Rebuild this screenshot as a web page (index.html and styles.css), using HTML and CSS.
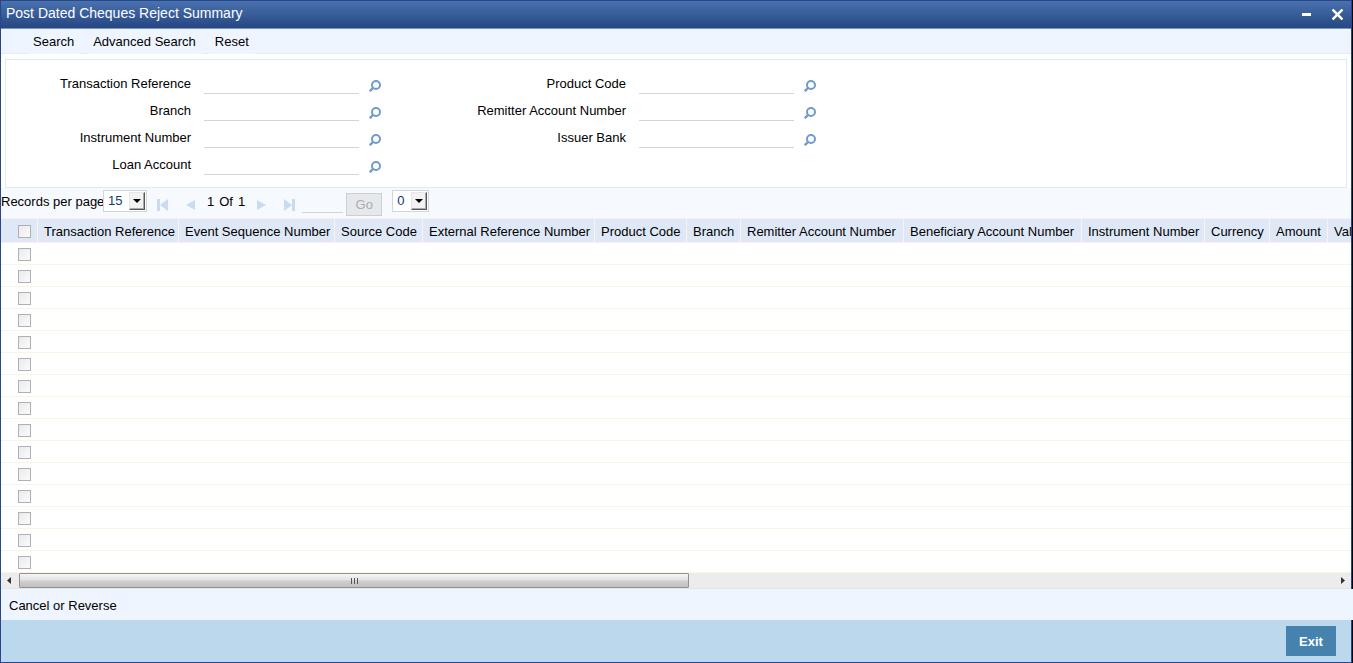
FILE: index.html
```html
<!DOCTYPE html>
<html lang="en">
<head>
    <meta charset="UTF-8">
    <meta name="viewport" content="width=device-width, initial-scale=1.0">
    <title>Post Dated Cheques Reject Summary</title>
    <link rel="stylesheet" href="styles.css">
</head>
<body>
    <svg class="sprite" aria-hidden="true">
        <symbol id="lens" viewBox="0 0 12 12">
            <circle cx="7" cy="5" r="4" fill="none" stroke="#6f9bd0" stroke-width="2"/>
            <path d="M4.5 7.5 L0.8 11.2" stroke="#6f9bd0" stroke-width="2.4"/>
        </symbol>
        <symbol id="arrow" viewBox="0 0 8 4">
            <path d="M0 0 H8 L4 4 Z" fill="#000"/>
        </symbol>
    </svg>

    <div class="window">
        <header class="titlebar">
            <h1>Post Dated Cheques Reject Summary</h1>
            <div class="window-buttons">
                <button type="button" aria-label="Minimize">
                    <svg width="11" height="11" viewBox="0 0 11 11"><path d="M1 4h9v3h-9z" fill="#fff"/></svg>
                </button>
                <button type="button" aria-label="Close">
                    <svg width="11" height="11" viewBox="0 0 11 11"><path d="M0.5 0.5 L10.5 10.5 M10.5 0.5 L0.5 10.5" stroke="#fff" stroke-width="2.4"/></svg>
                </button>
            </div>
        </header>

        <nav class="menu">
            <button type="button">Search</button>
            <button type="button">Advanced Search</button>
            <button type="button">Reset</button>
        </nav>

        <form class="criteria">
            <div class="criteria-column">
                <div class="field">
                    <label for="txn-ref">Transaction Reference</label>
                    <input type="text" id="txn-ref">
                    <button type="button" aria-label="Find transaction reference"><svg><use href="#lens"/></svg></button>
                </div>
                <div class="field">
                    <label for="branch">Branch</label>
                    <input type="text" id="branch">
                    <button type="button" aria-label="Find branch"><svg><use href="#lens"/></svg></button>
                </div>
                <div class="field">
                    <label for="instrument">Instrument Number</label>
                    <input type="text" id="instrument">
                    <button type="button" aria-label="Find instrument number"><svg><use href="#lens"/></svg></button>
                </div>
                <div class="field">
                    <label for="loan">Loan Account</label>
                    <input type="text" id="loan">
                    <button type="button" aria-label="Find loan account"><svg><use href="#lens"/></svg></button>
                </div>
            </div>
            <div class="criteria-column">
                <div class="field">
                    <label for="product">Product Code</label>
                    <input type="text" id="product">
                    <button type="button" aria-label="Find product code"><svg><use href="#lens"/></svg></button>
                </div>
                <div class="field">
                    <label for="remitter">Remitter Account Number</label>
                    <input type="text" id="remitter">
                    <button type="button" aria-label="Find remitter account"><svg><use href="#lens"/></svg></button>
                </div>
                <div class="field">
                    <label for="issuer">Issuer Bank</label>
                    <input type="text" id="issuer">
                    <button type="button" aria-label="Find issuer bank"><svg><use href="#lens"/></svg></button>
                </div>
            </div>
        </form>

        <div class="pager">
            <label for="page-size">Records per page</label>
            <span class="select size-select">
                <select id="page-size"><option>15</option></select>
                <span class="select-arrow"><svg><use href="#arrow"/></svg></span>
            </span>
            <div class="pager-nav">
                <button type="button" aria-label="First page" disabled>
                    <svg width="11" height="12" viewBox="0 0 11 12"><path d="M0 0h3v12h-3z M11 0v12L3 6z"/></svg>
                </button>
                <button type="button" aria-label="Previous page" disabled>
                    <svg width="11" height="12" viewBox="0 0 11 12"><path d="M10 1v10L1 6z"/></svg>
                </button>
                <span class="pager-count"><span>1</span><span>Of</span><span>1</span></span>
                <button type="button" aria-label="Next page" disabled>
                    <svg width="11" height="12" viewBox="0 0 11 12"><path d="M1 1v10L10 6z"/></svg>
                </button>
                <button type="button" aria-label="Last page" disabled>
                    <svg width="11" height="12" viewBox="0 0 11 12"><path d="M8 0h3v12h-3z M0 0v12L8 6z"/></svg>
                </button>
            </div>
            <input class="page-input" type="text" aria-label="Page number">
            <button class="go" type="button" disabled>Go</button>
            <span class="select lock-select">
                <select aria-label="Locked columns"><option>0</option></select>
                <span class="select-arrow"><svg><use href="#arrow"/></svg></span>
            </span>
        </div>

        <div class="results">
            <table>
                <thead>
                    <tr>
                        <th class="check"><input type="checkbox" aria-label="Select all"></th>
                        <th class="col-txn">Transaction Reference</th>
                        <th class="col-event">Event Sequence Number</th>
                        <th class="col-source">Source Code</th>
                        <th class="col-external">External Reference Number</th>
                        <th class="col-product">Product Code</th>
                        <th class="col-branch">Branch</th>
                        <th class="col-remitter">Remitter Account Number</th>
                        <th class="col-beneficiary">Beneficiary Account Number</th>
                        <th class="col-instrument">Instrument Number</th>
                        <th class="col-currency">Currency</th>
                        <th class="col-amount">Amount</th>
                        <th class="col-value">Value Date</th>
                    </tr>
                </thead>
                <tbody id="rows"></tbody>
            </table>
        </div>

        <div class="scrollbar" aria-hidden="true">
            <svg class="scroll-arrow" viewBox="0 0 4 7"><path d="M4 0v7L0 3.5z" fill="#333"/></svg>
            <div class="scroll-track">
                <div class="scroll-thumb"><i></i><i></i><i></i></div>
            </div>
            <svg class="scroll-arrow" viewBox="0 0 4 7"><path d="M0 0v7L4 3.5z" fill="#333"/></svg>
        </div>

        <div class="actions">
            <a href="#">Cancel or Reverse</a>
        </div>

        <footer class="footer">
            <button type="button">Exit</button>
        </footer>
    </div>

    <script>
        const rows = document.getElementById('rows');

        for (let i = 1; i <= 15; i++) {
            const row = document.createElement('tr');
            row.innerHTML = '<td class="check"><input type="checkbox" aria-label="Select row ' + i + '"></td><td colspan="12"></td>';
            rows.appendChild(row);
        }
    </script>
</body>
</html>
```
FILE: styles.css
```css
* {
    box-sizing: border-box;
}

body {
    margin: 0;
    padding-right: 1px;
    background: #05050f;
    color: #000;
    font-family: "Liberation Sans", Arial, sans-serif;
    font-size: 13px;
    line-height: 16px;
    overflow: hidden;
}

button,
input,
select {
    margin: 0;
    padding: 0;
    border: 0;
    border-radius: 0;
    background: none;
    color: inherit;
    font: inherit;
    outline: none;
}

svg {
    display: block;
}

.sprite {
    display: none;
}

.window {
    display: flex;
    flex-direction: column;
    min-height: 100vh;
    border: 1px solid #26478a;
    border-top: 0;
    background: #fff;
}

.titlebar {
    display: flex;
    align-items: flex-start;
    justify-content: space-between;
    height: 29px;
    padding: 4px 8px 0 5px;
    border-top: 1px solid #26478a;
    border-bottom: 1px solid #7b96bb;
    background: linear-gradient(#4a72ae, #254783);
    color: #fff;
}

.titlebar h1 {
    margin: 0;
    font-size: 14px;
    font-weight: normal;
}

.window-buttons {
    display: flex;
    gap: 20px;
    padding-top: 4px;
}

.menu {
    display: flex;
    gap: 7px;
    height: 25px;
    padding-left: 26px;
    border-bottom: 1px solid #e8ebee;
    background: #eef5ff;
}

.menu button {
    height: 25px;
    padding: 0 6px;
    background: #eef5ff;
}

.criteria {
    display: flex;
    height: 129px;
    margin: 5px 4px 0;
    padding-top: 10px;
    border: 1px solid #e1e9f3;
}

.criteria-column {
    width: 435px;
}

.field {
    display: flex;
    align-items: center;
    height: 27px;
}

.field label {
    width: 185px;
    margin-right: 13px;
    text-align: right;
}

.field input {
    width: 155px;
    height: 21px;
    margin-right: 10px;
    border-bottom: 1px solid #d3d5d8;
}

.field button {
    padding-top: 4px;
}

.field svg {
    width: 12px;
    height: 12px;
}

.pager {
    display: flex;
    align-items: flex-start;
    height: 30px;
    padding-top: 2px;
    background: #f6f9fe;
}

.pager label {
    width: 102px;
    padding-top: 4px;
    white-space: nowrap;
}

.select {
    position: relative;
    height: 22px;
    border: 1px solid #d3d5d8;
    background: #fff;
}

.select select {
    display: block;
    width: 100%;
    height: 20px;
    padding-left: 4px;
    color: #123a70;
    appearance: none;
}

.size-select {
    width: 44px;
}

.lock-select {
    width: 37px;
    margin-left: 10px;
}

.select-arrow {
    position: absolute;
    top: 1px;
    right: 1px;
    display: flex;
    align-items: center;
    justify-content: center;
    width: 16px;
    height: 18px;
    border: 1px solid #e6e6e6;
    border-right-color: #555;
    border-bottom-color: #555;
    background: #f2f2f2;
    box-shadow: inset -1px -1px #aaa;
    pointer-events: none;
}

.select-arrow svg {
    width: 8px;
    height: 4px;
}

.pager-nav {
    display: flex;
    padding-left: 10px;
    gap: 17px;
}

.pager-nav button {
    padding-top: 9px;
    fill: #c9daf1;
}

.pager-count {
    display: flex;
    gap: 5px;
    margin: 0 -6px;
    padding-top: 4px;
}

.page-input {
    width: 41px;
    height: 23px;
    margin: 0 3px 0 7px;
    border-bottom: 1px solid #d3d5d8;
}

.go {
    width: 36px;
    height: 23px;
    margin-top: 3px;
    border: 1px solid #c9cfd6;
    background: #e7e8eb;
    color: #a9acb1;
}

.results {
    overflow: hidden;
}

table {
    width: 1400px;
    border-collapse: separate;
    border-spacing: 0;
    table-layout: fixed;
}

th {
    height: 25px;
    padding: 2px 0 0 6px;
    border-top: 1px solid #fbf0e6;
    border-right: 1px solid #fbf3ec;
    border-bottom: 1px solid #fbf0e6;
    background: #dfe8f6;
    font-weight: normal;
    text-align: left;
    white-space: nowrap;
}

td {
    height: 22px;
    padding: 0;
    border-bottom: 1px solid #fbf3e4;
}

.check {
    width: 37px;
    padding: 2px 0 0 17px;
}

.check input {
    display: block;
    width: 13px;
    height: 13px;
    border: 1px solid #aeb0b3;
    background: linear-gradient(135deg, #e9eaeb, #fbfbfb);
    appearance: none;
}

.col-txn {
    width: 141px;
}

.col-event {
    width: 156px;
}

.col-source {
    width: 88px;
}

.col-external {
    width: 172px;
}

.col-product {
    width: 92px;
}

.col-branch {
    width: 54px;
}

.col-remitter {
    width: 163px;
}

.col-beneficiary {
    width: 178px;
}

.col-instrument {
    width: 123px;
}

.col-currency {
    width: 65px;
}

.col-amount {
    width: 58px;
}

.scrollbar {
    display: flex;
    align-items: center;
    height: 16px;
    padding: 0 6px;
    border-bottom: 1px solid #e3e5e8;
    background: #ececec;
}

.scroll-arrow {
    width: 4px;
    height: 7px;
}

.scroll-track {
    flex: 1;
    margin: 0 8px;
}

.scroll-thumb {
    display: flex;
    align-items: center;
    justify-content: center;
    gap: 2px;
    width: 51%;
    height: 15px;
    border: 1px solid #929292;
    border-radius: 1px;
    background: linear-gradient(#f5f5f5, #e3e3e3 45%, #cfcfcf 55%, #c0c0c0);
}

.scroll-thumb i {
    width: 1px;
    height: 6px;
    background: #555;
}

.actions {
    height: 31px;
    margin-right: -2px;
    padding: 9px 8px;
    background: #eef5ff;
}

.actions a {
    color: inherit;
    text-decoration: none;
}

.footer {
    display: flex;
    flex: 1;
    align-items: center;
    justify-content: flex-end;
    padding: 6px 15px;
    background: #bcd8ec;
}

.footer button {
    width: 50px;
    height: 30px;
    padding-top: 2px;
    background: #4682ae;
    color: #fff;
    font-weight: bold;
}
```
